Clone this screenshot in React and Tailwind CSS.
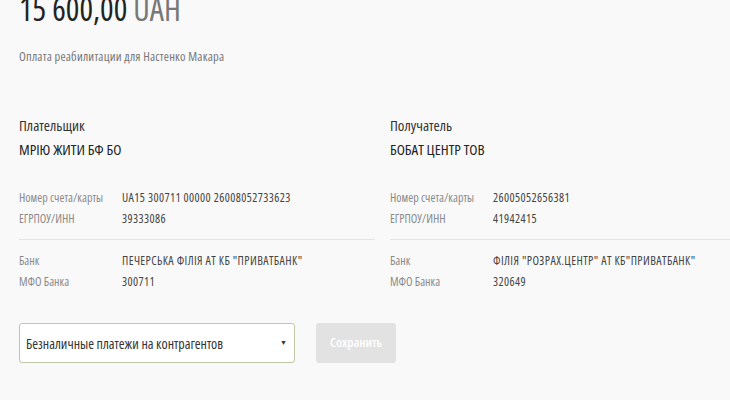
import React from "react";

const Row = ({ label, value }) => (
  <div className="flex h-[21px] items-center">
    <span className="w-[103px] shrink-0 text-[#8a8a8a]">{label}</span>
    <span className="tracking-[0.4px] text-[#444]">{value}</span>
  </div>
);

const Party = ({ title, name, account, code, bank, mfo }) => (
  <div className="flex flex-col">
    <div className="text-[15px] leading-[20px] text-[#333]">{title}</div>
    <div className="mt-[4px] text-[15px] leading-[20px] text-[#222]">{name}</div>
    <div className="mt-[28px] text-[12px]">
      <Row label="Номер счета/карты" value={account} />
      <Row label="ЕГРПОУ/ИНН" value={code} />
    </div>
    <div className="mt-[10px] border-t border-[#e4e4e4]" />
    <div className="mt-[10px] text-[12px]">
      <Row label="Банк" value={bank} />
      <Row label="МФО Банка" value={mfo} />
    </div>
  </div>
);

export default function App() {
  return (
    <div className="h-[400px] w-[730px] overflow-hidden bg-[#f9f9f9] pl-[19px] font-['Open_Sans','Noto_Sans',sans-serif] font-stretch-condensed">
      <div className="-mt-[11px] text-[32px] leading-[40px] text-[#222]">
        15 600,00 <span className="text-[#777]">UAH</span>
      </div>
      <div className="mt-[20px] text-[12.5px] leading-[16px] tracking-[0.2px] text-[#777]">
        Оплата реабилитации для Настенко Макара
      </div>

      <div className="mt-[50px] grid grid-cols-[356px_1fr] gap-x-[15px]">
        <Party
          title="Плательщик"
          name="МРІЮ ЖИТИ БФ БО"
          account="UA15 300711 00000 26008052733623"
          code="39333086"
          bank={'ПЕЧЕРСЬКА ФІЛІЯ АТ КБ "ПРИВАТБАНК"'}
          mfo="300711"
        />
        <Party
          title="Получатель"
          name="БОБАТ ЦЕНТР ТОВ"
          account="26005052656381"
          code="41942415"
          bank={'ФІЛІЯ "РОЗРАХ.ЦЕНТР" АТ КБ"ПРИВАТБАНК"'}
          mfo="320649"
        />
      </div>

      <div className="mt-[31px] flex gap-[21px]">
        <div className="flex h-[40px] w-[276px] items-center justify-between rounded-[3px] border border-[#bcc8a8] bg-white pl-[6px] pr-[7px] text-[14px] text-[#333]">
          <span>Безналичные платежи на контрагентов</span>
          <span className="text-[7px] text-[#333]">▼</span>
        </div>
        <button className="h-[40px] w-[80px] rounded-[3px] bg-[#e2e2e2] text-[13px] font-semibold text-white">
          Сохранить
        </button>
      </div>
    </div>
  );
}
